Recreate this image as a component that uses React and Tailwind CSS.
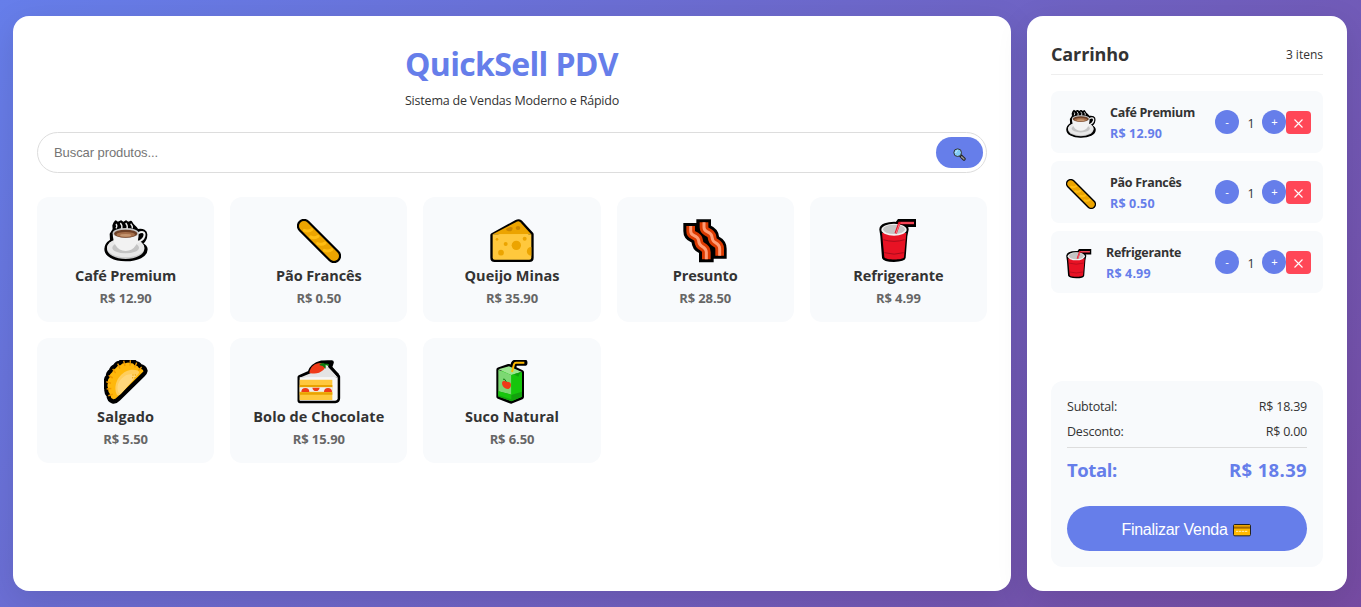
import React from "react";

const OUT = { stroke: "#000", strokeWidth: 15, strokeLinejoin: "round", strokeLinecap: "round" };

function Coffee() {
  return (
    <g>
      <path {...OUT} strokeWidth="6" d="M31 12l4-5 6 5 10-5 7 5 8-5 7 5 8-4 5 8 9 9 6 8c16-3 27 3 26 15 0 12-6 20-13 26 9 5 14 10 14 17 0 20-27 33-63 33S4 110 4 90c0-12 6-19 17-26l-1-19 9-14-1-11z" />
      <ellipse cx="65" cy="89" rx="56" ry="31" fill="#c9c9c9" />
      <ellipse cx="65" cy="86" rx="56" ry="29" fill="#e8e8e8" />
      <ellipse cx="65" cy="86" rx="40" ry="17" fill="#c4c4c4" />
      <path d="M102 43c15-8 22-3 19 9-3 11-12 15-22 19" fill="none" stroke="#f2f2f2" strokeWidth="6" />
      <path d="M26 43h78c0 28-11 53-39 53S27 71 26 43z" fill="#f2f2f2" />
      <ellipse cx="65" cy="42" rx="39" ry="15" fill="#c7c7c7" />
      <ellipse cx="65" cy="44" rx="35" ry="12" fill="#6d4026" />
      <ellipse cx="65" cy="47" rx="28" ry="8" fill="#a66f4a" />
      <ellipse cx="65" cy="49" rx="17" ry="4" fill="#c59670" />
      <path d="M36 15q5 6 0 13M49 12q7 8 4 17M65 12q7 8 4 17M80 14q6 6 5 14" fill="none" stroke="#ededed" strokeWidth="4" />
    </g>
  );
}

function Baguette() {
  return (
    <g>
      <path d="M21 21L111 111" stroke="#000" strokeWidth="43" strokeLinecap="round" />
      <path d="M21 21L111 111" stroke="#eca400" strokeWidth="30" strokeLinecap="round" />
      <path d="M22 34q13 5 22-2M41 54q13 5 22-2M62 74q13 5 22-2M82 94q13 5 22-2" stroke="#ffbd12" strokeWidth="9" strokeLinecap="round" fill="none" />
    </g>
  );
}

function Cheese() {
  return (
    <g>
      <path {...OUT} strokeWidth="14" fill="#ffc83d" d="M8 49L80 9q6-3 11 1l33 36v70q0 6-6 6H14q-6 0-6-6z" />
      <path fill="#eca400" d="M8 46L80 8q6-3 11 2l32 35z" />
      <path fill="#ffc83d" d="M8 46h116v70q0 6-6 6H14q-6 0-6-6z" />
      <g fill="#c98500"><ellipse cx="84" cy="27" rx="7" ry="6" /><path d="M48 30q13-9 20-4 0 12-12 11-8-1-8-7z" /></g>
      <g fill="#eca400">
        <circle cx="79" cy="79" r="14" /><circle cx="33" cy="101" r="8.5" /><circle cx="47" cy="75" r="6" />
        <circle cx="104" cy="59" r="6" /><circle cx="21" cy="61" r="4" /><path d="M124 84c-18 0-18 26 0 26z" />
      </g>
    </g>
  );
}

function Bacon() {
  const outer = "M23 12v24q0 9 9 13 14 6 15 16 1 13 10 17 13 7 13 18v30";
  const inner = "M23 21v15q0 9 9 13 14 6 15 16 1 13 10 17 13 7 13 18v21";
  return (
    <g fill="none">
      <path d={outer} stroke="#000" strokeWidth="44" />
      <path d={outer} transform="translate(39 -11)" stroke="#000" strokeWidth="44" />
      <path d={inner} stroke="#dc3a00" strokeWidth="26" />
      <path d={inner} transform="translate(40 -11)" stroke="#dc3a00" strokeWidth="26" />
      <path d={inner} stroke="#ff9c75" strokeWidth="9" />
      <path d={inner} transform="translate(40 -11)" stroke="#ff9c75" strokeWidth="9" />
    </g>
  );
}

function Soda() {
  return (
    <g>
      <path d="M50 22L66 0h54v24H78l-6 8z" fill="#000" />
      <path {...OUT} strokeWidth="12" fill="#e81224" d="M16 31C17 9 92 9 92 31l-4 20-5 65c-2 9-56 9-59 0l-5-65z" />
      <path fill="#e81224" d="M18 42h73l-7 73c-2 9-56 9-59 0z" />
      <path d="M22 62q32 10 64 0M25 101q30 9 58 0" fill="none" stroke="#a80c1b" strokeWidth="3" />
      <ellipse cx="54" cy="32" rx="38" ry="18" fill="#f2f2f2" />
      <ellipse cx="54" cy="31" rx="33" ry="14" fill="#c5c5c5" />
      <path d="M59 43l11-31h44" fill="none" stroke="#e81224" strokeWidth="7" />
      <path d="M60 43l10-28" fill="none" stroke="#ff7888" strokeWidth="3" />
      <path d="M74 12h40" stroke="#ff7888" strokeWidth="3" />
    </g>
  );
}

function Empanada() {
  return (
    <g transform="translate(0 -16) scale(1 1.13)">
      <path stroke="#000" strokeWidth="12" strokeLinejoin="round" fill="#ffb80b" d="M26 124q-12-4-13-16-8-8-6-17-5-8-1-17-2-10 5-16 0-10 9-15 3-9 12-12 6-9 15-9 8-7 16-5 10-5 18 0 10-1 14 6 10 1 14 8 13 2 16 12-1 5-6 9L44 117q-10 9-18 7z" />
      <path stroke="#f09a00" strokeWidth="4" d="M26 105l-13 4M22 90L8 91M21 76L7 72M26 62l-12-7M35 49l-9-11M48 37l-7-13M63 30l-4-14M78 29l1-14M92 34l6-13M103 42l10-9" />
      <path fill="#ffce5c" d="M38 106c-9-20-1-38 11-50s31-20 52-14q7 4 2 9L52 103q-9 9-14 3z" />
      <path fill="#ffd983" d="M43 100c-6-16 0-28 10-37s22-13 39-10q6 3 1 8L55 99q-8 7-12 1z" opacity=".8" />
      <g fill="#eca400"><circle cx="87" cy="54" r="2" /><circle cx="94" cy="54" r="2" /><circle cx="86" cy="61" r="2" /><circle cx="93" cy="61" r="2" /></g>
    </g>
  );
}

function Cake() {
  return (
    <g>
      <path {...OUT} strokeWidth="13" fill="#f2f2f2" d="M8 52l30-14q6-22 36-30l30-1-5 15 24 28v65q0 8-8 8H8z" />
      <path fill="#e4e4e4" d="M8 53l36-15 35-18h18l24 31z" />
      <path fill="#f7f7f7" d="M8 52h114v63q0 7-7 7H8z" />
      <path fill="#ffc83d" d="M8 59h98v61H8z" />
      <path fill="#e9a300" d="M8 75h98v7H8zM8 97h98v7H8z" />
      <path fill="#eee" d="M8 82h98v13H8z" />
      <path fill="#f03a17" d="M13 96q0-12 12-12t12 12zM81 96q0-12 12-12t12 12zM46 83h22q-2 10-11 10t-11-10z" />
      <path fill="#f03a17" d="M37 38c3-19 18-31 37-29 13 2 14 14 4 22-10 9-26 13-41 7z" />
      <path fill="#107c10" d="M68 12q9-5 16-1l20-5q-9 4-10 12l-8-3v11l-9-8-9-2z" />
      <path fill="#000" d="M72 5q18-5 37-1-8 5-9 13l26 25-6 7-26-27 2-9z" />
    </g>
  );
}

function Juice() {
  return (
    <g>
      <path {...OUT} strokeWidth="14" fill="#16c60c" d="M26 29l30-10 6 2 33 16v74l-32 13-37-14z" />
      <path d="M66 32l6-20q2-4 6-4h25" fill="none" stroke="#000" strokeWidth="19" strokeLinecap="round" />
      <path fill="#9be58f" d="M25 28l32-9 39 17-32 9z" />
      <path fill="#7dd873" d="M25 29l39 16v78l-39-14z" />
      <path fill="#16c60c" d="M64 45l32-9v74l-32 14z" />
      <path fill="#13a10e" d="M25 94l39 10v20l-39-14zM64 105l32-10v15l-32 14zM71 43l20-6-6 13z" />
      <path fill="#16c60c" d="M25 94l39 10v14l-39-12z" />
      <path fill="#f03a17" d="M37 65c7-7 10 0 14 0 8 0 12 4 12 10 0 8-6 14-12 11-8 0-18-12-14-21z" />
      <path d="M49 65l-6-8-4 1" fill="none" stroke="#107c10" strokeWidth="3" />
      <path d="M66 36l6-23q2-5 6-5h25" fill="none" stroke="#ffb900" strokeWidth="6" />
    </g>
  );
}

const products = [
  { name: "Café Premium", price: "R$ 12.90", Icon: Coffee, cls: "tracking-[-0.14px]" },
  { name: "Pão Francês", price: "R$ 0.50", Icon: Baguette, cls: "tracking-[-0.1px]" },
  { name: "Queijo Minas", price: "R$ 35.90", Icon: Cheese, cls: "tracking-normal" },
  { name: "Presunto", price: "R$ 28.50", Icon: Bacon, cls: "tracking-[-0.1px]" },
  { name: "Refrigerante", price: "R$ 4.99", Icon: Soda, cls: "tracking-[-0.1px]" },
  { name: "Salgado", price: "R$ 5.50", Icon: Empanada, cls: "tracking-[0.1px]" },
  { name: "Bolo de Chocolate", price: "R$ 15.90", Icon: Cake, cls: "tracking-[0.08px]" },
  { name: "Suco Natural", price: "R$ 6.50", Icon: Juice, cls: "tracking-normal" },
];

const cart = [
  { ...products[0], box: "0 0 132 132", size: "w-[30px] mr-[14px]" },
  { ...products[1], box: "0 0 132 132", size: "w-[30px] mr-[14px]" },
  { ...products[4], box: "9 0 112 132", size: "w-[25.5px] mr-[14.5px]" },
];

function ProductCard({ name, price, Icon, cls }) {
  return (
    <div className="flex h-[125px] flex-col items-center rounded-xl bg-[#f8fafc] pt-[22px]">
      <svg viewBox="0 0 132 132" className="h-11 w-11 shrink-0"><Icon /></svg>
      <h3 className={`mt-px h-6 text-[14.5px] leading-6 font-bold whitespace-nowrap text-[#333] ${cls}`}>{name}</h3>
      <p className="text-[13px] leading-[21px] font-bold tracking-[-0.1px] text-[#666]">{price}</p>
    </div>
  );
}

function CartRow({ name, price, Icon, box, size }) {
  return (
    <div className="flex h-[62px] items-center rounded-lg bg-[#f8fafc] pr-3 pl-[15px]">
      <svg viewBox={box} className={`mt-1 h-[30px] shrink-0 ${size}`}><Icon /></svg>
      <div className="flex-1 pt-0.5 text-[12.5px] leading-[21px] font-bold whitespace-nowrap">
        <h4 className="tracking-[-0.29px] text-[#333]">{name}</h4>
        <p className="tracking-[0.15px] text-[#667eea]">{price}</p>
      </div>
      <div className="flex items-center">
        <button className="h-6 w-6 rounded-full bg-[#667eea] font-['Liberation_Sans',sans-serif] text-[11px] leading-6 text-white">-</button>
        <span className="w-[23px] pt-1 pl-px text-center text-[12.5px]">1</span>
        <button className="h-6 w-6 rounded-full bg-[#667eea] pl-px font-['Liberation_Sans',sans-serif] text-[11px] leading-6 text-white">+</button>
        <button aria-label="Remover" className="mt-px flex h-[23px] w-[25px] items-center justify-center rounded bg-[#ff4757]">
          <svg viewBox="0 0 9 9" className="mt-px h-[9px] w-[9px]"><path d="M.5.5l8 8M8.5.5l-8 8" stroke="#fff" strokeWidth="1.1" /></svg>
        </button>
      </div>
    </div>
  );
}

export default function App() {
  return (
    <div className="flex h-[607px] w-[1361px] gap-4 overflow-hidden bg-[linear-gradient(135deg,#667eea_0%,#764ba2_100%)] pt-4 pr-[14px] pb-4 pl-[13px] font-['Open_Sans','Noto_Sans',sans-serif] text-[#333]">
      <main className="w-[998px] shrink-0 rounded-2xl bg-white px-6 pt-6 shadow-[0_8px_32px_rgba(0,0,0,0.1)]">
        <header className="text-center">
          <h1 className="h-12 pr-px text-[32px] leading-[47px] font-bold tracking-[-0.65px] text-[#667eea]">QuickSell PDV</h1>
          <p className="h-6 text-[12.5px] leading-[26px] tracking-[-0.2px]">Sistema de Vendas Moderno e Rápido</p>
        </header>
        <div className="mt-5 flex h-[41px] items-center rounded-full border border-[#ddd] pr-[3px] pl-4 font-['Liberation_Sans',sans-serif]">
          <span className="flex-1 text-[13px] tracking-[-0.08px] text-[#757575]">Buscar produtos...</span>
          <button aria-label="Buscar" className="flex h-[31px] w-[47px] items-center justify-center rounded-full bg-[#667eea]">
            <svg viewBox="0 0 39 39" className="mt-[3px] h-[13px] w-[13px]">
              <path d="M22 22l11 11" stroke="#222" strokeWidth="10" strokeLinecap="round" />
              <path d="M26 26l7 7" stroke="#999" strokeWidth="4" strokeLinecap="round" />
              <circle cx="14" cy="14" r="11.5" fill="#83cbf5" stroke="#333" strokeWidth="3" />
              <path d="M8 15q0-6 6-8" fill="none" stroke="#d0efff" strokeWidth="3" />
            </svg>
          </button>
        </div>
        <section className="mt-6 grid grid-cols-5 gap-4">
          {products.map((p) => <ProductCard key={p.name} {...p} />)}
        </section>
      </main>
      <aside className="flex w-[320px] shrink-0 flex-col rounded-2xl bg-white p-6 shadow-[0_8px_32px_rgba(0,0,0,0.1)]">
        <div className="flex h-[35px] items-center justify-between border-b border-[#eee] pb-[6px]">
          <h2 className="text-[18px] font-bold tracking-[-0.13px]">Carrinho</h2>
          <span className="pt-0.5 text-[12px]">3 itens</span>
        </div>
        <div className="mt-4 flex flex-col gap-2">
          {cart.map((c) => <CartRow key={c.name} {...c} />)}
        </div>
        <div className="mt-auto h-[186px] rounded-xl bg-[#f8fafc] px-4 pt-[14px]">
          <div className="flex h-[25px] items-center justify-between text-[12.5px] tracking-[-0.22px]">
            <span>Subtotal:</span><span>R$ 18.39</span>
          </div>
          <div className="flex h-[25px] items-center justify-between text-[12.5px] tracking-[-0.22px]">
            <span>Desconto:</span><span>R$ 0.00</span>
          </div>
          <div className="mt-[2px] flex h-[46px] items-center justify-between border-t border-[#ddd] pb-[2px] text-[18.5px] font-bold text-[#667eea]">
            <span className="tracking-[-0.4px]">Total:</span><span className="tracking-[0.35px]">R$ 18.39</span>
          </div>
          <button className="mt-[13px] flex h-[45px] w-full items-center justify-center gap-[5px] rounded-full bg-[#667eea] pr-[2px] font-['Liberation_Sans',sans-serif] text-[16px] tracking-[-0.28px] text-white">
            <span className="pt-[3px]">Finalizar Venda</span>
            <svg viewBox="0 0 54 39" className="mt-[3px] h-[13px] w-[18px]">
              <rect x="1.5" y="1.5" width="51" height="34" rx="4" fill="#ffb900" stroke="#222" strokeWidth="3" />
              <path d="M3 7h48v7H3z" fill="#a66a00" />
              <path d="M3 3h48v4H3z" fill="#eca400" />
              <path d="M9 22h36" stroke="#fff0b8" strokeWidth="3" strokeDasharray="7 2" />
            </svg>
          </button>
        </div>
      </aside>
    </div>
  );
}
